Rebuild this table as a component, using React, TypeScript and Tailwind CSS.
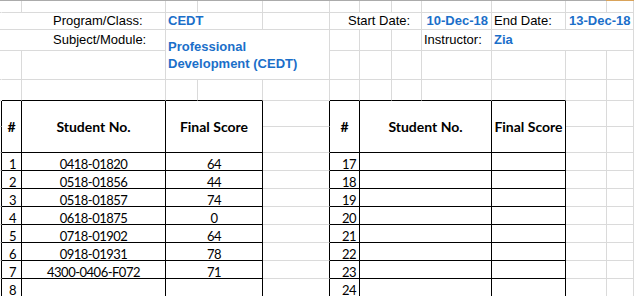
import React from "react"

type Cell = {
  r: number
  c: number
  rs?: number
  cs?: number
  content?: React.ReactNode
  cls?: string
}

const label = "items-center font-['Liberation_Sans',Arial,sans-serif] text-[13px] text-black"
const value = "items-center font-['Liberation_Sans',Arial,sans-serif] text-[13px] font-bold text-[#1b6fc9]"
const head = "items-center justify-center font-['Lato',sans-serif] text-[14px] font-bold text-black"
const body = "items-end font-['Lato',sans-serif] text-[13px] leading-[12px] tracking-[-0.5px] text-black"

const students = [
  { id: "0418-01820", score: "64" },
  { id: "0518-01856", score: "44" },
  { id: "0518-01857", score: "74" },
  { id: "0618-01875", score: "0" },
  { id: "0718-01902", score: "64" },
  { id: "0918-01931", score: "78" },
  { id: "4300-0406-F072", score: "71" },
  { id: "", score: "" },
]

const ROWS = 15
const COLS = 13

// sheet coordinates: table blocks with black borders
const inTable = (r: number, c: number) =>
  r >= 5 && r < ROWS && ((c >= 1 && c <= 4) || (c >= 6 && c <= 10))

function buildCells(): Cell[] {
  const specs: Cell[] = [
    { r: 1, c: 0, cs: 3, content: "Program/Class:", cls: `${label} pl-[53px]` },
    { r: 1, c: 3, cs: 2, content: "CEDT", cls: `${value} pl-[2px]` },
    { r: 1, c: 6, cs: 3, content: "Start Date:", cls: `${label} pl-[18px]` },
    { r: 1, c: 9, content: "10-Dec-18", cls: `${value} justify-end pr-[3px]` },
    { r: 1, c: 10, content: "End Date:", cls: `${label} pl-[2px]` },
    { r: 1, c: 11, cs: 2, content: "13-Dec-18", cls: `${value} pl-[3px]` },

    { r: 2, c: 0, cs: 3, content: "Subject/Module:", cls: `${label} pl-[53px]` },
    {
      r: 2,
      c: 3,
      rs: 2,
      cs: 3,
      content: (
        <span className="flex flex-col leading-[17px]">
          <span>Professional</span>
          <span>Development (CEDT)</span>
        </span>
      ),
      cls: `${value} pl-[2px]`,
    },
    { r: 2, c: 9, content: "Instructor:", cls: `${label} pl-[2px]` },
    { r: 2, c: 10, cs: 3, content: "Zia", cls: `${value} pl-[2px]` },

    { r: 5, c: 1, rs: 2, content: "#", cls: head },
    { r: 5, c: 2, rs: 2, content: "Student No.", cls: head },
    { r: 5, c: 3, rs: 2, cs: 2, content: "Final Score", cls: head },
    { r: 5, c: 6, rs: 2, content: "#", cls: head },
    { r: 5, c: 7, rs: 2, cs: 3, content: "Student No.", cls: head },
    { r: 5, c: 10, rs: 2, content: "Final Score", cls: head },
  ]

  students.forEach((s, i) => {
    const r = 7 + i
    specs.push(
      { r, c: 1, content: i + 1, cls: `${body} pl-[7px]` },
      { r, c: 2, content: s.id, cls: `${body} justify-center` },
      { r, c: 3, cs: 2, content: s.score, cls: `${body} justify-center` },
      { r, c: 6, content: i + 17, cls: `${body} justify-end pr-[3px]` },
      { r, c: 7, cs: 3 },
      { r, c: 10 }
    )
  })

  const taken: boolean[][] = Array.from({ length: ROWS }, () => Array(COLS).fill(false))
  specs.forEach((s) => {
    for (let r = s.r; r < s.r + (s.rs ?? 1); r++)
      for (let c = s.c; c < s.c + (s.cs ?? 1); c++) taken[r][c] = true
  })
  for (let r = 0; r < ROWS; r++)
    for (let c = 0; c < COLS; c++) if (!taken[r][c]) specs.push({ r, c })

  return specs
}

function SheetCell({ cell }: { cell: Cell }) {
  const rs = cell.rs ?? 1
  const cs = cell.cs ?? 1
  const lastCol = cell.c + cs - 1
  const lastRow = cell.r + rs - 1

  let rightBlack = false
  for (let r = cell.r; r <= lastRow; r++)
    if (inTable(r, lastCol) || inTable(r, lastCol + 1)) rightBlack = true

  let bottomBlack = false
  for (let c = cell.c; c <= lastCol; c++)
    if (inTable(lastRow, c) || inTable(lastRow + 1, c)) bottomBlack = true

  const rightNone = lastCol === 0 && !rightBlack

  const right = rightBlack
    ? "border-r-black"
    : rightNone
      ? "border-r-transparent"
      : "border-r-[#dadada]"
  const bottom = bottomBlack ? "border-b-black" : "border-b-[#dadada]"

  return (
    <div
      className={`flex min-w-0 whitespace-nowrap border-r border-b ${right} ${bottom} ${cell.cls ?? ""}`}
      style={{ gridRow: `${cell.r + 1} / span ${rs}`, gridColumn: `${cell.c + 1} / span ${cs}` }}
    >
      {cell.content}
    </div>
  )
}

export default function App() {
  const cells = buildCells()

  return (
    <div className="w-[634px] h-[296px] overflow-hidden bg-white">
      <div className="flex h-px">
        <div className="w-[606px] bg-[#ababab]" />
        <div className="flex-1 bg-[#d9a35a]" />
      </div>
      <div className="grid grid-cols-[2px_20px_144px_32px_65px_67px_30px_32px_30px_70px_74px_41px_27px] grid-rows-[12px_17px_21px_29px_21px_26px_26px_18px_18px_18px_18px_18px_18px_18px_18px]">
        {cells.map((cell) => (
          <SheetCell key={`${cell.r}-${cell.c}`} cell={cell} />
        ))}
      </div>
    </div>
  )
}
